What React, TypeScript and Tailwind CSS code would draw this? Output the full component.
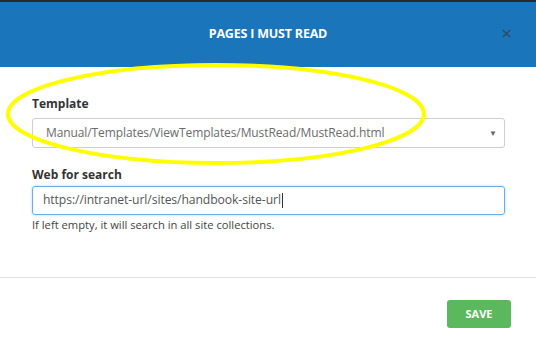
const font = { fontFamily: '"Open Sans", "Noto Sans", Arial, sans-serif' };

export default function App() {
  return (
    <div className="relative w-[536px] h-[349px] overflow-hidden bg-white" style={font}>
      <div className="h-[2px] bg-[#2a2a2a]" />
      <div className="relative flex h-[65px] items-center justify-center bg-[#1a75bb]">
        <h1 className="text-[12.5px] font-bold tracking-[-0.2px] text-white">PAGES I MUST READ</h1>
        <button className="absolute right-[24px] top-[22px] text-[19px] leading-none text-[#34485c]">×</button>
      </div>

      <div className="px-[32px] pt-[29px]">
        <label className="block text-[12px] font-bold leading-[16px] text-[#333]">Template</label>
        <div className="mt-[6px] flex h-[30px] w-[473px] items-center justify-between rounded-[3px] border border-[#cfcfcf] pl-[13px] pr-[7px]">
          <span className="text-[12px] tracking-[-0.1px] text-[#6b6b6b]">Manual/Templates/ViewTemplates/MustRead/MustRead.html</span>
          <span className="text-[8px] text-[#666]">▼</span>
        </div>

        <label className="mt-[19px] block text-[12px] font-bold leading-[16px] text-[#333]">Web for search</label>
        <div className="mt-[3px] flex h-[29px] w-[473px] items-center rounded-[3px] border border-[#66afe9] pl-[10px] shadow-[0_0_3px_rgba(102,175,233,0.5)]">
          <span className="text-[12.2px] tracking-[-0.1px] text-[#555]">https://intranet-url/sites/handbook-site-url</span>
          <span className="ml-[1px] h-[15px] w-px bg-[#333]" />
        </div>
        <p className="mt-[3px] text-[11.2px] leading-[14px] text-[#444]">If left empty, it will search in all site collections.</p>
      </div>

      <div className="mt-[45px] border-t border-[#e2e2e2]" />
      <div className="flex justify-end pr-[25px] pt-[22px]">
        <button className="flex h-[28px] w-[64px] items-center justify-center rounded-[3px] bg-[#5cb85c] text-[11px] font-bold text-white">
          SAVE
        </button>
      </div>

      <svg className="pointer-events-none absolute left-0 top-0" width="536" height="349">
        <ellipse cx="216" cy="114" rx="208" ry="49" fill="none" stroke="#ffff00" strokeWidth="4" />
      </svg>
    </div>
  );
}
